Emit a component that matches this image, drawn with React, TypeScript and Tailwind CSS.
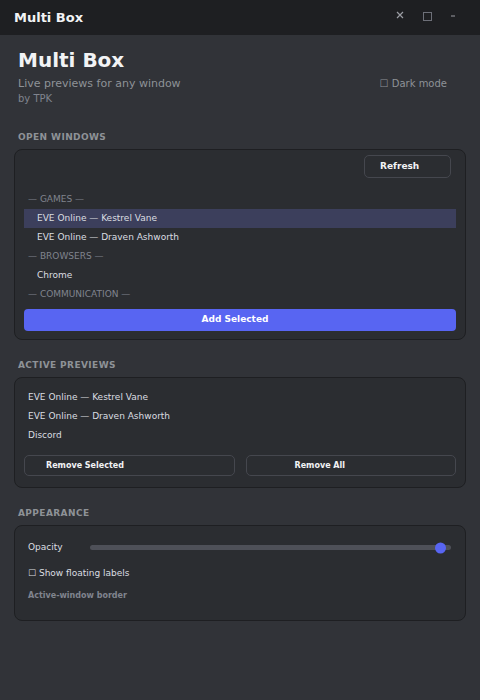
import React from "react";

const font = { fontFamily: '"DejaVu Sans", "Liberation Sans", sans-serif' };

function SectionTitle({ children }: { children: React.ReactNode }) {
  return (
    <div className="px-[18px] text-[9px] font-bold tracking-[0.4px] text-[#8e9297] leading-[12px]">
      {children}
    </div>
  );
}

function GroupLabel({ children }: { children: React.ReactNode }) {
  return (
    <div className="h-[19px] flex items-center pl-[4px] text-[9px] text-[#80848e]">
      — {children} —
    </div>
  );
}

function Row({ children, selected }: { children: React.ReactNode; selected?: boolean }) {
  return (
    <div
      className={
        "h-[19px] flex items-center pl-[13px] text-[9px] text-[#dbdee1] " +
        (selected ? "bg-[#3c3f5c]" : "")
      }
    >
      {children}
    </div>
  );
}

function PreviewRow({ children }: { children: React.ReactNode }) {
  return <div className="h-[19px] flex items-center pl-[4px] text-[9px] text-[#dbdee1]">{children}</div>;
}

export default function App() {
  return (
    <div style={font} className="w-[480px] h-[700px] bg-[#313338] flex flex-col">
      {/* title bar */}
      <div className="h-[35px] bg-[#1e1f22] flex items-center px-[14px] shrink-0">
        <div className="text-[13px] font-bold text-[#f2f3f5]">Multi Box</div>
        <div className="ml-auto flex items-center gap-[18px] pr-[10px]">
          <svg width="8" height="8" viewBox="0 0 8 8" className="mt-[-5px] ml-[1px]">
            <path d="M1 1L7 7M7 1L1 7" stroke="#9a9ca3" strokeWidth="1.2" />
          </svg>
          <svg width="9" height="9" viewBox="0 0 9 9" className="mt-[-2px] ml-[1px]">
            <rect x="0.5" y="0.5" width="8" height="8" fill="none" stroke="#6d6f78" strokeWidth="1" />
          </svg>
          <svg width="6" height="6" viewBox="0 0 6 6" className="mt-[-4px]">
            <path d="M1 3H5" stroke="#9a9ca3" strokeWidth="1" />
          </svg>
        </div>
      </div>

      {/* header */}
      <div className="flex items-start px-[18px] pt-[13px]">
        <div>
          <div className="text-[20px] font-bold leading-[24px] text-[#f2f3f5]">Multi Box</div>
          <div className="text-[11px] leading-[15px] text-[#8e9297] mt-[4px]">Live previews for any window</div>
          <div className="text-[10px] leading-[13px] text-[#80848e] mt-[1px]">by TPK</div>
        </div>
        <div className="ml-auto mt-[28px] mr-[15px] text-[10px] text-[#8e9297]">☐ Dark mode</div>
      </div>

      {/* open windows */}
      <div className="mt-[26px]">
        <SectionTitle>OPEN WINDOWS</SectionTitle>
      </div>
      <div className="mx-[14px] mt-[6px] rounded-[8px] border border-[#1e1f22] bg-[#2b2d31] px-[9px] pt-[5px] pb-[8px]">
        <div className="flex justify-end pr-[5px]">
          <div className="w-[87px] h-[23px] rounded-[5px] border border-[#45474e] flex items-center pl-[15px] text-[9px] font-bold text-[#f2f3f5]">
            Refresh
          </div>
        </div>
        <div className="mt-[12px] h-[119px] overflow-hidden">
          <GroupLabel>GAMES</GroupLabel>
          <Row selected>EVE Online — Kestrel Vane</Row>
          <Row>EVE Online — Draven Ashworth</Row>
          <GroupLabel>BROWSERS</GroupLabel>
          <Row>Chrome</Row>
          <GroupLabel>COMMUNICATION</GroupLabel>
          <Row>Discord</Row>
        </div>
        <div className="h-[22px] rounded-[4px] bg-[#5865f2] flex items-center justify-center pr-[10px] text-[9px] font-bold text-white">
          Add Selected
        </div>
      </div>

      {/* active previews */}
      <div className="mt-[19px]">
        <SectionTitle>ACTIVE PREVIEWS</SectionTitle>
      </div>
      <div className="mx-[14px] mt-[6px] rounded-[8px] border border-[#1e1f22] bg-[#2b2d31] px-[9px] pt-[10px] pb-[11px]">
        <PreviewRow>EVE Online — Kestrel Vane</PreviewRow>
        <PreviewRow>EVE Online — Draven Ashworth</PreviewRow>
        <PreviewRow>Discord</PreviewRow>
        <div className="mt-[10px] grid grid-cols-2 gap-[11px]">
          <div className="h-[21px] rounded-[5px] border border-[#45474e] flex items-center pl-[21px] text-[8px] font-bold text-[#f2f3f5]">
            Remove Selected
          </div>
          <div className="h-[21px] rounded-[5px] border border-[#45474e] flex items-center pl-[48px] text-[8px] font-bold text-[#f2f3f5]">
            Remove All
          </div>
        </div>
      </div>

      {/* appearance */}
      <div className="mt-[19px]">
        <SectionTitle>APPEARANCE</SectionTitle>
      </div>
      <div className="mx-[14px] mt-[6px] h-[96px] rounded-[8px] border border-[#1e1f22] bg-[#2b2d31] px-[13px] pt-[12px]">
        <div className="h-[19px] flex items-center">
          <div className="w-[62px] text-[9px] text-[#dbdee1]">Opacity</div>
          <div className="relative flex-1 mr-[1px] h-[5px] rounded-full bg-[#4e5058]">
            <div className="absolute right-[5px] top-1/2 -translate-y-1/2 w-[11px] h-[11px] rounded-full bg-[#5865f2]" />
          </div>
        </div>
        <div className="mt-[10px] text-[9px] text-[#dbdee1] leading-[12px]">☐ Show floating labels</div>
        <div className="mt-[11px] text-[8px] font-bold text-[#80848e] leading-[11px]">Active-window border</div>
      </div>
    </div>
  );
}
